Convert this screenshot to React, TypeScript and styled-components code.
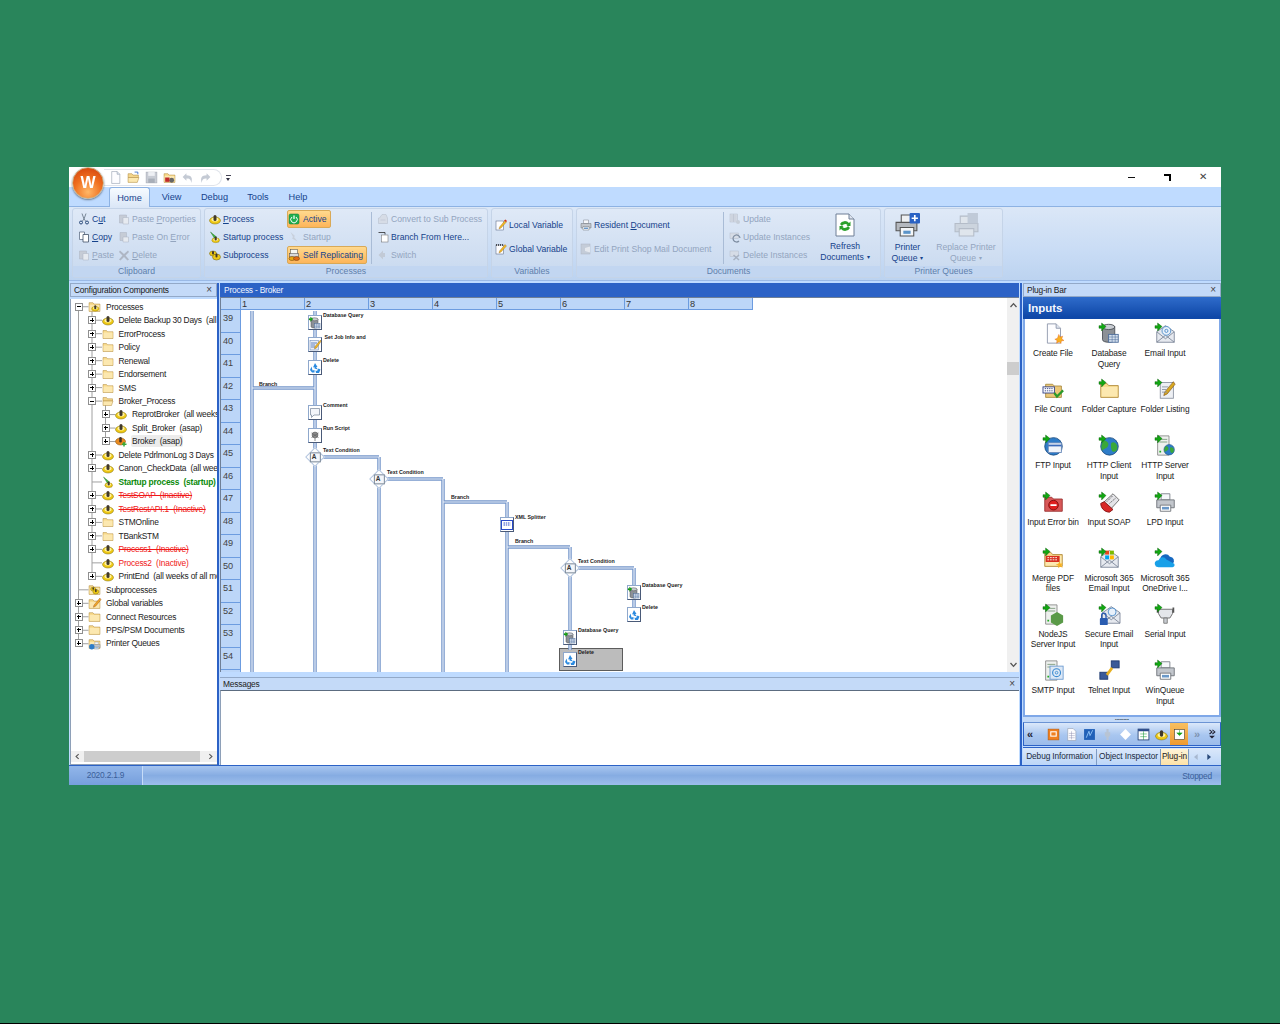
import React from "react";
import styled, { createGlobalStyle } from "styled-components";

const Global = createGlobalStyle`
  html, body { margin: 0; padding: 0; background: #29855b; }
  #root { font-family: "Liberation Sans", Arial, sans-serif; }
  * { box-sizing: border-box; }
`;

const Stage = styled.div`
  height: 1024px;
  padding: 167px 59px 0 69px;
  background: #29855b;
  border-bottom: 1px solid #000;
`;
const Win = styled.div`
  width: 1152px;
  height: 618px;
  display: flex;
  flex-direction: column;
  background: #bfdbff;
  position: relative;
  font-size: 8.4px;
  letter-spacing: -0.2px;
  color: #222;
  filter: blur(0.4px);
`;

/* ---------- icons ---------- */
const arrowBadge = <path d="M0 3h3V0l5 4-5 5V6H0z" fill="#12a812" stroke="#0a5a0a" strokeWidth=".5" />;
const gear = (
  <>
    <ellipse cx="12" cy="15" rx="11" ry="7" fill="#eec814" stroke="#7c6a08" />
    <ellipse cx="12" cy="13" rx="7" ry="4" fill="#fff2a0" />
    <rect x="9" y="4" width="6" height="12" rx="3" fill="#40382a" />
  </>
);
const folder = (
  <>
    <path d="M2 5h7l2 2.500h11V21H2z" fill="#f8d98a" stroke="#b08a3e" />
    <path d="M3 9h18v11H3z" fill="#fce8b0" />
  </>
);
const folderOpen = (
  <>
    <path d="M2 5h7l2 2.500h10V12H2z" fill="#f4d68c" stroke="#b08a3e" />
    <path d="M2 12h20l-3 9H2z" fill="#fce8b0" stroke="#b08a3e" />
  </>
);
const page = <path d="M5 1h10l5 5v17H5z" fill="#fdfdff" stroke="#8a94a8" />;
const pageFold = <path d="M15 1v5h5" fill="#dfe5ef" stroke="#8a94a8" />;
const printer = (
  <>
    <path d="M7 2h10v7H7z" fill="#f5f7fa" stroke="#7a7f88" />
    <path d="M2 9h20v9H2z" fill="#c2c6cc" stroke="#6c7076" />
    <path d="M6 15h12v7H6z" fill="#fff" stroke="#6c7076" />
    <rect x="8" y="17" width="8" height="3" fill="#6a98c8" />
  </>
);
const db = (
  <>
    <path d="M4 4v15c0 4 14 4 14 0V4z" fill="#8c9096" stroke="#4c5056" />
    <ellipse cx="11" cy="4.500" rx="7" ry="3" fill="#c8ccd2" stroke="#4c5056" />
    <rect x="11" y="13" width="11" height="9" fill="#d4e0ee" stroke="#4a6a98" />
    <path d="M11 16h11M11 19h11M15 13v9M18.500 13v9" stroke="#4a6a98" strokeWidth=".6" />
  </>
);
const mail = (
  <>
    <path d="M2 10l10-7 10 7v12H2z" fill="#e6e9ef" stroke="#7c8698" />
    <path d="M2 22l10-8 10 8M2 10l10 8 10-8" fill="none" stroke="#7c8698" />
  </>
);
const globe = (
  <>
    <circle cx="12" cy="13" r="10" fill="#2e7cc8" stroke="#184a80" />
    <path d="M6 6c4 1 6 4 4 7s-5 2-6 5c-2-3-2-8 2-12zM14 9c3-2 7 1 7 5s-3 6-5 5-3-7-2-10z" fill="#3aa83a" />
  </>
);
const server = (
  <>
    <path d="M3 1h13v22H3z" fill="#eef0ee" stroke="#888" />
    <path d="M5 5h9M5 8h9" stroke="#7a9a7a" />
    <rect x="5" y="18" width="2" height="2" fill="#2a2" />
  </>
);
const recycle = (
  <path d="M12 2l5 8-3 0 4 5-7-2 0-3-3 1zM5 9l-3 7 4 5 5 0 0-5-4 1zM14 22l6 0 3-7-4-2-3 5-3-1z" fill="#2a8ae0" />
);
const subGears = (
  <>
    <ellipse cx="8" cy="9" rx="7" ry="5" fill="#eec814" stroke="#6a5a08" />
    <ellipse cx="15" cy="16" rx="8" ry="6" fill="#eec814" stroke="#6a5a08" />
    <rect x="13" y="9" width="4" height="8" rx="2" fill="#40382a" />
    <rect x="6" y="4" width="4" height="7" rx="2" fill="#40382a" />
  </>
);
const G: Record<string, React.ReactNode> = {
  newdoc: <>{page}{pageFold}</>,
  open: (
    <>
      {folderOpen}
      <path d="M14 2h6v4" fill="none" stroke="#2a62c4" strokeWidth="1.500" />
    </>
  ),
  save: (
    <>
      <rect x="2" y="2" width="20" height="20" fill="#c8ccd4" stroke="#a4a8b2" />
      <rect x="6" y="2" width="12" height="7" fill="#eef0f4" />
      <rect x="6" y="14" width="12" height="8" fill="#a8aeb8" />
    </>
  ),
  deploy: (
    <>
      {folder}
      <circle cx="16" cy="17" r="4.500" fill="#666" />
      <rect x="4" y="12" width="8" height="8" fill="#c02a2a" />
    </>
  ),
  undo: <path d="M3 11l7-7v4c9 0 12 5 9 14-1-7-4-8-9-8v4z" fill="#c4cad4" />,
  redo: <path d="M21 11l-7-7v4c-9 0-12 5-9 14 1-7 4-8 9-8v4z" fill="#c4cad4" />,
  cutRings: (
    <>
      <path d="M8 1l4 11 4-11M12 12l-4 5M12 12l4 5" fill="none" stroke="#7a8898" strokeWidth="2" />
      <circle cx="6" cy="19" r="3" fill="none" stroke="#2a4a7a" strokeWidth="2" />
      <circle cx="18" cy="19" r="3" fill="none" stroke="#2a4a7a" strokeWidth="2" />
    </>
  ),
  copy: (
    <>
      <path d="M3 2h10v15H3z" fill="#fff" stroke="#5a6a80" strokeWidth="1.500" />
      <path d="M10 7h11v15H10z" fill="#fff" stroke="#3a4a60" strokeWidth="1.500" />
    </>
  ),
  paste: (
    <>
      <path d="M3 4h14v16H3z" fill="#c6ccd6" stroke="#aab2c0" />
      <path d="M10 9h11v13H10z" fill="#e6eaf0" stroke="#aab2c0" />
    </>
  ),
  pasteErr: (
    <>
      <path d="M4 3h13v16H4z" fill="#c6ccd6" stroke="#aab2c0" />
      <path d="M10 12h11v10H10z" fill="#e6eaf0" stroke="#aab2c0" />
    </>
  ),
  del: <path d="M4 3l8 7 8-7 2 3-7 7 7 8-3 2-7-7-7 7-3-2 7-8-7-7z" fill="#aeb6c4" />,
  process: gear,
  startup: (
    <>
      <path d="M3 2l12 10-3 2 8 8-12-6 2-3z" fill="#3fb83f" stroke="#1a6a1a" strokeWidth=".8" />
      <g transform="translate(5 8) scale(.7)">{gear}</g>
    </>
  ),
  startupOff: <path d="M5 2l9 8-2 2 7 9-11-6 2-3z" fill="#c8d0dc" />,
  subprocess: subGears,
  active: (
    <>
      <rect x="2" y="2" width="20" height="20" rx="3" fill="#20b050" stroke="#0c7030" />
      <path d="M12 5v7" stroke="#fff" strokeWidth="2.500" />
      <path d="M8 8a6.500 6.500 0 1 0 8 0" fill="none" stroke="#fff" strokeWidth="2" />
    </>
  ),
  selfrep: (
    <>
      <rect x="5" y="1" width="14" height="10" fill="#f6f6f0" stroke="#444" />
      <rect x="3" y="9" width="18" height="7" fill="#d8d8d8" stroke="#444" />
      <ellipse cx="8" cy="19" rx="6" ry="4" fill="#e8a814" stroke="#6a3a08" />
      <ellipse cx="17" cy="19" rx="6" ry="4" fill="#e06a14" stroke="#6a3a08" />
    </>
  ),
  convert: (
    <>
      <path d="M5 10l5-7h8l3 7v11H3V10z" fill="#d6dce6" stroke="#b2bac8" />
      <path d="M7 14h10" stroke="#b2bac8" />
    </>
  ),
  branch: (
    <>
      <path d="M3 3h13v4" fill="none" stroke="#222" strokeWidth="1.500" />
      <rect x="9" y="8" width="13" height="14" fill="#fff" stroke="#666" />
    </>
  ),
  switchOff: <path d="M3 12l9-9v5h4v8h-4v5z" fill="#c2cad6" />,
  localVar: (
    <>
      <rect x="2" y="4" width="15" height="18" fill="#fdfdff" stroke="#4a5a78" />
      <path d="M20 3L9 16l-1 4 4-2L23 6z" fill="#f0b828" stroke="#805010" strokeWidth=".6" />
      <path d="M18 3l4 3 2-2-3-3z" fill="#d03020" />
    </>
  ),
  globalVar: (
    <>
      <rect x="2" y="4" width="15" height="18" fill="#fdfdff" stroke="#4a5a78" />
      <path d="M3 2v4M7 2v4M11 2v4M15 2v4" stroke="#2a2a2a" strokeWidth="1.500" />
      <path d="M20 3L9 16l-1 4 4-2L23 6z" fill="#f0b828" stroke="#805010" strokeWidth=".6" />
    </>
  ),
  printer,
  editDoc: (
    <>
      <rect x="2" y="2" width="18" height="20" fill="#c4ccd8" stroke="#aab4c2" />
      <path d="M10 10l10-3v12l-10-3z" fill="#e4e8ee" />
    </>
  ),
  update: (
    <>
      <rect x="2" y="2" width="15" height="16" fill="#d6dce6" stroke="#b4bcca" />
      <path d="M4 6h11M4 10h11M4 14h11M9 2v16" stroke="#b4bcca" />
      <circle cx="18" cy="18" r="4" fill="#c6ced8" />
    </>
  ),
  updateInst: (
    <>
      <rect x="2" y="4" width="17" height="11" fill="#d6dce6" stroke="#b4bcca" />
      <path d="M22 14a7 7 0 1 0-2 6" fill="none" stroke="#7f8ea2" strokeWidth="2.500" />
    </>
  ),
  delInst: (
    <>
      <rect x="2" y="4" width="17" height="11" fill="#d6dce6" stroke="#b4bcca" />
      <path d="M9 12l11 10M20 12L9 22" stroke="#a8b2c2" strokeWidth="3" />
    </>
  ),
  refreshDoc: (
    <>
      <path d="M3 1h13l5 5v17H3z" fill="#fff" stroke="#6f7f96" />
      <path d="M16 1v5h5" fill="#dfe5ef" stroke="#6f7f96" />
      <path d="M7 11a5.500 5.500 0 0 1 9-1l1.500-1.500V13h-4l1-1a3.500 3.500 0 0 0-5.500 1z" fill="#2aa02a" />
      <path d="M17 15a5.500 5.500 0 0 1-9 1l-1.500 1.500V13h4l-1 1a3.500 3.500 0 0 0 5.500-1z" fill="#2aa02a" />
    </>
  ),
  printerAdd: (
    <>
      <path d="M6 2h10v8H6z" fill="#eef0f2" stroke="#555" />
      <path d="M1 9h20v8H1z" fill="#b4b8be" stroke="#555" />
      <path d="M5 14h13v8H5z" fill="#f4f6f8" stroke="#555" />
      <rect x="8" y="17" width="7" height="3" fill="#5c94c8" />
      <rect x="14" y="0" width="10" height="10" rx="1" fill="#2a62c4" />
      <path d="M19 2v6M16 5h6" stroke="#fff" strokeWidth="1.600" />
    </>
  ),
  printerOff: (
    <>
      <path d="M6 3h11v8H6z" fill="#dfe5ec" stroke="#b4bcc8" />
      <path d="M1 10h22v8H1z" fill="#ccd4de" stroke="#b4bcc8" />
      <path d="M5 15h14v7H5z" fill="#dfe5ec" stroke="#b4bcc8" />
      <rect x="13" y="0" width="10" height="10" fill="#c0cad8" />
    </>
  ),
  folder,
  folderOpen,
  procFolder: (
    <>
      {folder}
      <g transform="translate(6 7) scale(.62)">{gear}</g>
    </>
  ),
  procSel: (
    <>
      <ellipse cx="11" cy="13" rx="10" ry="7" fill="#e88a20" stroke="#7c4a08" />
      <rect x="8.500" y="4" width="5" height="11" rx="2.500" fill="#40302a" />
      <path d="M18 14v9M14 18.500h9" stroke="#36a836" strokeWidth="3" />
    </>
  ),
  subFolder: (
    <>
      {folder}
      <g transform="translate(4 5) scale(.7)">{subGears}</g>
    </>
  ),
  varFolder: (
    <>
      {folder}
      <path d="M22 2L11 15l-1 4 4-2L24 5z" fill="#f0a828" stroke="#904010" strokeWidth=".7" />
    </>
  ),
  printFolder: (
    <>
      {folder}
      <g transform="translate(8 8) scale(.65)">{printer}</g>
      <circle cx="7" cy="18" r="5" fill="#2e7cc8" />
    </>
  ),
  /* plug-ins */
  createFile: (
    <>
      {page}{pageFold}
      <path d="M18 13l1.500 3 3-1-1 3 2.500 2-3 .5-.5 3-2-2-3 1.500.5-3-2.500-1.500 3-1z" fill="#f8b020" stroke="#e05010" strokeWidth=".4" />
    </>
  ),
  dbQuery: <>{db}{arrowBadge}</>,
  email: (
    <>
      {mail}
      <circle cx="13" cy="9" r="5" fill="#e8f0fa" stroke="#4a8ac8" />
      <circle cx="13" cy="9" r="1.800" fill="none" stroke="#4a8ac8" />
      {arrowBadge}
    </>
  ),
  fileCount: (
    <>
      <path d="M3 6h8l2 2h8v13H3z" fill="#ecc878" stroke="#a88a40" />
      <rect x="0" y="9" width="13" height="7" fill="#fff" stroke="#2a3a80" />
      <path d="M2 11h9M2 13.500h9" stroke="#2a3a80" strokeDasharray="1.500 1" />
      <path d="M13 16l3 4 7-7" fill="none" stroke="#2a9a2a" strokeWidth="2.500" />
    </>
  ),
  folderCap: <>{folder}{arrowBadge}</>,
  listing: (
    <>
      <rect x="6" y="4" width="15" height="18" fill="#eef0f4" stroke="#8a92a0" />
      <path d="M21 3L11 15l-1 4 4-2L23 6z" fill="#d8a820" stroke="#704010" strokeWidth=".6" />
      <path d="M8 9h7M8 12h5M8 15h6" stroke="#8a92a0" />
      {arrowBadge}
    </>
  ),
  jobInfo: (
    <>
      <rect x="2" y="3" width="17" height="19" fill="#e8eef8" stroke="#5a7ab0" />
      <path d="M4 8h12M4 12h8M4 16h10" stroke="#3a62a8" strokeWidth="1.500" />
      <path d="M23 2L12 15l-1 5 4-2L24 5z" fill="#f0b828" stroke="#805010" strokeWidth=".7" />
    </>
  ),
  comment: (
    <path d="M3 3h18v13H10l-5 5v-5H3z" fill="#f4f6fa" stroke="#6a7a90" strokeWidth="1.300" />
  ),
  script: (
    <>
      <circle cx="12" cy="10" r="6" fill="#8a8a8a" stroke="#555" />
      <path d="M5 6l14 9M19 6L5 15M12 16v6" stroke="#666" strokeWidth="1.500" />
    </>
  ),
  ftp: (
    <>
      <circle cx="12" cy="13" r="10" fill="#2e7cc8" stroke="#184a80" />
      <rect x="6" y="9" width="15" height="11" fill="#f0f4fa" stroke="#6a8aba" />
      <path d="M6 12h15" stroke="#3a6aba" strokeWidth="2" />
      {arrowBadge}
    </>
  ),
  httpClient: <>{globe}{arrowBadge}</>,
  httpServer: (
    <>
      {server}
      <g transform="translate(9 9) scale(.6)">{globe}</g>
      {arrowBadge}
    </>
  ),
  errBin: (
    <>
      <path d="M2 6h8l2 2h10v14H2z" fill="#d85858" stroke="#983030" />
      <circle cx="12" cy="15" r="5.500" fill="#e02020" stroke="#7a1010" />
      <rect x="8.500" y="14" width="7" height="2" fill="#fff" />
      {arrowBadge}
    </>
  ),
  soap: (
    <>
      <path d="M4 13L16 2l7 7-11 12z" fill="#e4e4e8" stroke="#666" />
      <path d="M2 13l4-2 10 9-4 3c-6 0-10-5-10-10z" fill="#d82828" stroke="#801010" />
      <path d="M9 11l7-7M12 13l7-6" stroke="#555" strokeDasharray="1.500 1" />
      {arrowBadge}
    </>
  ),
  lpd: <>{printer}{arrowBadge}</>,
  mergePdf: (
    <>
      {folder}
      <rect x="3" y="9" width="16" height="7" fill="#d83020" />
      <path d="M5 11h12M5 13.500h12" stroke="#fff" strokeDasharray="2 1" />
      <path d="M19 15l1 3 3-.5-2 2 1.500 3-3-1.500-2 2v-3l-3-1 3-1z" fill="#f8b020" />
      {arrowBadge}
    </>
  ),
  ms365Mail: (
    <>
      {mail}
      <rect x="7" y="3" width="4.500" height="4.500" fill="#e8471c" />
      <rect x="12.500" y="3" width="4.500" height="4.500" fill="#7cbb00" />
      <rect x="7" y="8.500" width="4.500" height="4.500" fill="#00a4ef" />
      <rect x="12.500" y="8.500" width="4.500" height="4.500" fill="#ffb900" />
      {arrowBadge}
    </>
  ),
  oneDrive: (
    <>
      <path d="M6 13a6 6 0 0 1 11-3 4.500 4.500 0 0 1 3 8H8z" fill="#1668c0" />
      <path d="M1 21a4 4 0 0 1 3-7 5 5 0 0 1 9-1l9 5a3 3 0 0 1-2 4H4z" fill="#18a0e8" />
      {arrowBadge}
    </>
  ),
  nodeJs: (
    <>
      {server}
      <path d="M16 9l7 4v8l-7 4-7-4v-8z" fill="#5a9a48" />
      {arrowBadge}
    </>
  ),
  secureMail: (
    <>
      <g transform="translate(2 0)">{mail}</g>
      <circle cx="15" cy="9" r="4.500" fill="#e8f0fa" stroke="#4a8ac8" />
      <rect x="1" y="16" width="9" height="8" rx="1" fill="#2a5cb0" />
      <path d="M3 16v-3a2.500 2.500 0 0 1 5 0v3" fill="none" stroke="#2a5cb0" strokeWidth="1.500" />
      {arrowBadge}
    </>
  ),
  serial: (
    <>
      <path d="M4 6h16v5l-3 5h-10l-3-5z" fill="#e4e6ea" stroke="#666" />
      <path d="M10 16h4v6h-4z" fill="#c8ccd2" stroke="#777" />
      <path d="M2 4h2v6H2zM20 4h2v6h-2z" fill="#555" />
      {arrowBadge}
    </>
  ),
  smtp: (
    <>
      {server}
      <rect x="8" y="7" width="15" height="15" fill="#dce8f6" stroke="#6a9ad0" />
      <circle cx="15.500" cy="14.500" r="4.500" fill="none" stroke="#3a8ad0" strokeWidth="1.300" />
      <circle cx="15.500" cy="14.500" r="1.500" fill="none" stroke="#3a8ad0" />
    </>
  ),
  telnet: (
    <>
      <rect x="14" y="1" width="9" height="8" fill="#3a5a98" stroke="#1e3a70" />
      <rect x="1" y="14" width="9" height="8" fill="#3a5a98" stroke="#1e3a70" />
      <path d="M9 17l6-8" stroke="#e8b020" strokeWidth="3" />
    </>
  ),
  winQueue: <>{printer}{arrowBadge}</>,
  /* toolbar */
  tbOrange: (
    <>
      <rect x="2" y="2" width="20" height="20" fill="#f08020" stroke="#b05a10" />
      <rect x="6" y="6" width="12" height="10" fill="#fff" />
      <rect x="8" y="8" width="8" height="6" fill="#f08020" />
    </>
  ),
  tbSheet: (
    <>
      {page}
      <path d="M7 10h11M7 14h11M7 18h11M12 6v15" stroke="#88a" strokeWidth=".8" />
    </>
  ),
  tbBlue: (
    <>
      <rect x="2" y="2" width="20" height="20" fill="#2060b8" />
      <path d="M6 18l5-12 2 8 5-10" stroke="#9fd0ff" strokeWidth="1.500" fill="none" />
    </>
  ),
  tbPlug: <path d="M10 2v6H7v6l3 3v5h4v-5l3-3V8h-3V2z" fill="#b8c4d4" />,
  tbDiamond: <path d="M12 2l10 10-10 10L2 12z" fill="#fff" />,
  tbPanel: (
    <>
      <rect x="2" y="2" width="20" height="20" fill="#fff" stroke="#1e3a70" strokeWidth="1.500" />
      <rect x="2" y="2" width="20" height="4" fill="#2a4a8a" />
      <path d="M12 6v16M6 11h12M6 16h12" stroke="#1a9a3a" />
    </>
  ),
  tbInput: (
    <>
      <rect x="3" y="3" width="18" height="18" fill="#fff" stroke="#333" />
      <path d="M12 4v6M7 9l5 5 5-5z" fill="#18a018" stroke="#18a018" />
    </>
  ),
  tbMore: (
    <>
      <path d="M6 2l6 5-6 5M13 2l6 5-6 5" fill="none" stroke="#223" strokeWidth="2.500" />
      <path d="M5 16h14l-7 7z" fill="#223" />
    </>
  ),
  rec: recycle,
  xml: (
    <>
      <rect x="1" y="3" width="22" height="18" fill="#fff" stroke="#2a4ac8" strokeWidth="2" />
      <path d="M5 8h14M5 12h14" stroke="#2a4ac8" strokeWidth="2" strokeDasharray="3 1.500" />
    </>
  ),
  chevUp: <path d="M4 16l8-9 8 9" fill="none" stroke="#555" strokeWidth="3.500" />,
  chevDown: <path d="M4 8l8 9 8-9" fill="none" stroke="#555" strokeWidth="3.500" />,
  chevLeft: <path d="M16 4l-9 8 9 8" fill="none" stroke="#555" strokeWidth="3.500" />,
  chevRight: <path d="M8 4l9 8-9 8" fill="none" stroke="#555" strokeWidth="3.500" />,
  triLeft: <path d="M17 3L6 12l11 9z" fill="#a8b8d0" />,
  triRight: <path d="M7 3l11 9-11 9z" fill="#2a4a7a" />,
};
const Icon: React.FC<{ n: string; s?: number }> = ({ n, s = 12 }) => (
  <svg width={s} height={s} viewBox="0 0 24 24" style={{ flex: "none", display: "block", overflow: "visible" }}>
    {G[n]}
  </svg>
);

/* ---------- title bar ---------- */
const TitleBar = styled.div`
  height: 20px;
  background: #fff;
  display: flex;
  align-items: center;
  padding-left: 35px;
`;
const Quick = styled.div`
  width: 118px;
  height: 17px;
  display: flex;
  align-items: center;
  gap: 5px;
  padding-left: 5px;
  border: 1px solid #dfe3ea;
  border-left: none;
  border-radius: 0 9px 9px 0;
`;
const QuickDrop = styled.span`
  margin-left: 4px;
  width: 5px;
  height: 7px;
  border-top: 1px solid #445;
  position: relative;
  margin-top: 2px;
  &::after {
    content: "";
    position: absolute;
    left: 0;
    top: 2px;
    border: 2.500px solid transparent;
    border-top: 3px solid #334;
  }
`;
const Orb = styled.div`
  position: absolute;
  left: 3px;
  top: 0;
  width: 32px;
  height: 32px;
  border-radius: 50%;
  border: 1px solid #c9b38a;
  background: radial-gradient(circle at 50% 80%, #ffb868 0%, #f07020 48%, #d84a10 85%);
  box-shadow: 0 1px 2px #6a7a90;
  color: #fff;
  font: bold 16px "Liberation Sans", sans-serif;
  letter-spacing: 0;
  display: flex;
  align-items: center;
  justify-content: center;
`;
const WinBtns = styled.div`
  margin-left: auto;
  width: 93px;
  display: flex;
  align-items: center;
  justify-content: space-between;
  padding: 0 14px 0 0;
`;
const Min = styled.span`
  width: 7px;
  height: 1px;
  background: #111;
`;
const Restore = styled.span`
  width: 7px;
  height: 7px;
  border-top: 2px solid #000;
  border-right: 2px solid #000;
`;
const CloseMark = styled.span`
  font-size: 10px;
  line-height: 10px;
  color: #444;
`;

/* ---------- ribbon ---------- */
const Tabs = styled.div`
  height: 20px;
  display: flex;
  align-items: flex-end;
  padding-left: 40px;
  border-bottom: 1px solid #8db2e3;
`;
const Tab = styled.div<{ $on?: boolean; $w: number }>`
  width: ${(p) => p.$w}px;
  height: 19px;
  text-align: center;
  line-height: 21px;
  font-size: 9.200px;
  letter-spacing: 0;
  color: #15428b;
  border-radius: 3px 3px 0 0;
  ${(p) =>
    p.$on
      ? "background: linear-gradient(#f6fbff, #dbe7f7); border: 1px solid #8db2e3; border-bottom: none; margin-bottom: -1px; height: 20px;"
      : ""}
`;
const Ribbon = styled.div`
  height: 74px;
  padding: 1px 0 0 3px;
  display: flex;
  gap: 3px;
  background: linear-gradient(#dbe7f7, #c9dcf5 60%, #bcd3f0);
  border-bottom: 1px solid #9ab9e6;
`;
const Group = styled.div<{ $w: number }>`
  width: ${(p) => p.$w}px;
  height: 70px;
  flex: none;
  display: flex;
  flex-direction: column;
  border: 1px solid #c5d4e8;
  border-radius: 3px;
  background: linear-gradient(#dfe9f7, #c8d9ef);
`;
const GroupBody = styled.div`
  flex: 1;
  display: flex;
  min-height: 0;
`;
const GroupName = styled.div`
  height: 11px;
  line-height: 11px;
  text-align: center;
  font-size: 8.650px;
  letter-spacing: 0;
  color: #5f80ab;
  background: #c2d6f1;
`;
const Col = styled.div<{ $w?: number; $pl?: number; $wide?: boolean }>`
  width: ${(p) => (p.$w ? p.$w + "px" : "auto")};
  padding-left: ${(p) => p.$pl ?? 0}px;
  padding-top: ${(p) => (p.$wide ? "4px" : "1px")};
  flex: none;
  display: flex;
  flex-direction: column;
`;
const Cmd = styled.div<{ $off?: boolean; $hot?: boolean; $h: number; $g: number }>`
  height: ${(p) => p.$h}px;
  display: flex;
  align-items: center;
  gap: ${(p) => p.$g}px;
  font-size: 8.650px;
  letter-spacing: 0;
  white-space: nowrap;
  color: ${(p) => (p.$off ? "#93a5bf" : "#15428b")};
  ${(p) =>
    p.$hot
      ? "background: linear-gradient(#ffd98e, #fdb55a); border: 1px solid #d9a957; border-radius: 2px; margin-left: -1px; width: fit-content; padding-right: 3px;"
      : ""}
`;
const Sep = styled.div`
  width: 1px;
  margin: 3px 5px 2px 2px;
  background: #a9bcd6;
  flex: none;
`;
const Big = styled.div<{ $off?: boolean; $w: number }>`
  width: ${(p) => p.$w}px;
  display: flex;
  flex-direction: column;
  align-items: center;
  flex: none;
  padding-top: 4px;
  font-size: 8.650px;
  letter-spacing: 0;
  line-height: 11px;
  text-align: center;
  color: ${(p) => (p.$off ? "#93a5bf" : "#15428b")};
`;
const BigLabel = styled.div`
  margin-top: 4px;
  white-space: nowrap;
`;
const Caret = styled.span`
  display: inline-block;
  margin-left: 3px;
  font-size: 6px;
  vertical-align: 1px;
`;

/* ---------- panes ---------- */
const Main = styled.div`
  flex: 1;
  display: flex;
  min-height: 0;
  padding: 2px 0 0 0;
  gap: 1px;
`;
const LeftPane = styled.div`
  width: 150px;
  flex: none;
  display: flex;
  flex-direction: column;
  border-right: 2px solid #2c62c6;
  padding-left: 1px;
`;
const CenterPane = styled.div`
  width: 799px;
  flex: none;
  display: flex;
  flex-direction: column;
`;
const RightPane = styled.div`
  flex: 1;
  min-width: 0;
  display: flex;
  flex-direction: column;
  border-left: 2px solid #2c62c6;
  padding-left: 1px;
`;
const PaneHead = styled.div<{ $blue?: boolean }>`
  height: 14px;
  flex: none;
  display: flex;
  align-items: center;
  justify-content: space-between;
  padding: 0 4px 1px 3px;
  border: 1px solid ${(p) => (p.$blue ? "#2c62c6" : "#93a9c8")};
  background: ${(p) => (p.$blue ? "#2c62c6" : "#c4daf8")};
  color: ${(p) => (p.$blue ? "#eef4ff" : "#202020")};
`;
const X = styled.span`
  font-size: 10px;
  line-height: 10px;
  color: #444;
`;

/* tree */
const TreeBox = styled.div`
  flex: 1;
  position: relative;
  background: #fff;
  border: 1px solid #8ea0b8;
  border-right: none;
  border-top: none;
  margin-top: 2px;
  padding-top: 1px;
  overflow: hidden;
  min-height: 0;
`;
const Guides = styled.svg`
  position: absolute;
  left: 0;
  top: 0;
`;
const Row = styled.div<{ $lv: number }>`
  position: relative;
  height: 13.480px;
  display: flex;
  align-items: center;
  padding-left: ${(p) => p.$lv * 13.500 + 2}px;
  white-space: pre;
`;
const ExpSlot = styled.span`
  width: 11px;
  margin-right: 4px;
  flex: none;
  display: flex;
  justify-content: center;
`;
const Exp = styled.span<{ $open?: boolean }>`
  width: 8px;
  height: 8px;
  border: 1px solid #8f8f8f;
  background: #fff;
  position: relative;
  &::before {
    content: "";
    position: absolute;
    left: 1px;
    right: 1px;
    top: 2.500px;
    height: 1px;
    background: #000;
  }
  &::after {
    content: "";
    display: ${(p) => (p.$open ? "none" : "block")};
    position: absolute;
    top: 1px;
    bottom: 1px;
    left: 2.500px;
    width: 1px;
    background: #000;
  }
`;
const NodeText = styled.span<{ $kind?: string; $sel?: boolean }>`
  margin-left: 5px;
  ${(p) => (p.$sel ? "background:#ececec; border-radius:2px; padding:1px 1px; margin-left:4px;" : "")}
  ${(p) => (p.$kind === "green" ? "color:#0a8a0a; font-weight:bold;" : "")}
  ${(p) => (p.$kind === "red" ? "color:#f01818;" : "")}
  ${(p) => (p.$kind === "strike" ? "color:#f01818; text-decoration:line-through;" : "")}
`;
const HScroll = styled.div`
  position: absolute;
  left: 0;
  right: 0;
  bottom: 2px;
  height: 11px;
  background: #f0f0f0;
  display: flex;
  align-items: center;
  justify-content: space-between;
  padding: 0 3px;
`;
const HThumb = styled.span`
  position: absolute;
  left: 13px;
  width: 116px;
  top: 0;
  bottom: 0;
  background: #cdcdcd;
`;

/* canvas */
const CanvasBox = styled.div`
  height: 375px;
  flex: none;
  display: flex;
  background: #fff;
  border-top: 1px solid #6f7f96;
  border-left: 1px solid #6f7f96;
`;
const CanvasMain = styled.div`
  flex: 1;
  min-width: 0;
  display: flex;
  flex-direction: column;
`;
const Ruler = styled.div`
  display: flex;
  height: 12px;
  flex: none;
`;
const RulerCorner = styled.div`
  width: 20px;
  background: #bcd6f8;
  border-right: 1px solid #6c9ce0;
  border-bottom: 1px solid #6c9ce0;
`;
const RulerCell = styled.div`
  width: 64px;
  padding-left: 1px;
  line-height: 13px;
  background: #bcd6f8;
  border-right: 1px solid #6c9ce0;
  border-bottom: 1px solid #6c9ce0;
  font-size: 9.200px;
  letter-spacing: 0;
  color: #333;
`;
const CanvasBody = styled.div`
  flex: 1;
  display: flex;
  min-height: 0;
`;
const RowHeader = styled.div`
  width: 20px;
  flex: none;
  overflow: hidden;
  background: #bcd6f8;
  border-right: 1px solid #6c9ce0;
`;
const RowNum = styled.div`
  height: 22.500px;
  padding: 3px 0 0 2px;
  font-size: 9.200px;
  line-height: 11px;
  letter-spacing: 0;
  color: #444;
  border-bottom: 1px solid #6c9ce0;
`;
const Sheet = styled.div`
  position: relative;
  flex: 1;
  overflow: hidden;
`;
const Wires = styled.svg`
  position: absolute;
  left: 0;
  top: 0;
`;
const Selection = styled.div`
  position: absolute;
  left: 318px;
  top: 338px;
  width: 64px;
  height: 23px;
  background: #bcbcbc;
  border: 1px solid #5c5c5c;
`;
const NodeTile = styled.div<{ $x: number; $y: number }>`
  position: absolute;
  left: ${(p) => p.$x}px;
  top: ${(p) => p.$y}px;
  width: 14px;
  height: 15px;
  background: #fff;
  border: 1px solid #8fa8cc;
  border-right-color: #4a5a78;
  border-bottom-color: #4a5a78;
  display: flex;
  align-items: center;
  justify-content: center;
`;
const Diamond = styled.div<{ $x: number; $y: number }>`
  position: absolute;
  left: ${(p) => p.$x}px;
  top: ${(p) => p.$y}px;
  width: 14px;
  height: 14px;
  background: #fff;
  border: 1px solid #b4c6e0;
  transform: rotate(45deg);
  display: flex;
  align-items: center;
  justify-content: center;
`;
const DiamondA = styled.span`
  transform: rotate(-45deg);
  width: 11px;
  height: 10px;
  display: block;
  border: 1px solid #7a8898;
  font-size: 6.500px;
  font-weight: bold;
  color: #333;
  line-height: 8px;
  padding-left: 1px;
  background: #f4f6fa;
`;
const NodeLabel = styled.div<{ $x: number; $y: number }>`
  position: absolute;
  left: ${(p) => p.$x}px;
  top: ${(p) => p.$y}px;
  font-size: 5.300px;
  letter-spacing: 0;
  line-height: 7px;
  font-weight: bold;
  white-space: pre;
  color: #1a1a1a;
`;
const VScroll = styled.div`
  width: 12px;
  flex: none;
  background: #f0f0f0;
  position: relative;
  padding: 3px 0;
  display: flex;
  flex-direction: column;
  justify-content: space-between;
  align-items: center;
`;
const VThumb = styled.span`
  position: absolute;
  left: 0;
  right: 0;
  top: 64px;
  height: 13px;
  background: #cdcdcd;
`;
const MsgGap = styled.div`
  height: 5px;
  flex: none;
`;
const MsgHead = styled.div`
  height: 13px;
  flex: none;
  display: flex;
  align-items: center;
  justify-content: space-between;
  padding: 0 4px 0 3px;
  background: #c4daf8;
  border-top: 1px solid #93a9c8;
`;
const MsgBody = styled.div`
  flex: 1;
  background: #fff;
  border-top: 1px solid #5c6c80;
  border-left: 1px solid #8ea0b8;
`;

/* plug-ins */
const InputsHead = styled.div`
  height: 22px;
  flex: none;
  padding-left: 5px;
  line-height: 23px;
  font-size: 11.500px;
  letter-spacing: 0;
  font-weight: bold;
  color: #f4f8ff;
  background: linear-gradient(#2f6ccb, #0f48a8 90%);
`;
const PluginGrid = styled.div`
  flex: none;
  height: 398px;
  padding: 4px 0 0 0;
  background: #fff;
  border: 2px solid #7fa8e8;
  border-top: none;
  display: grid;
  grid-template-columns: repeat(3, 56px);
  grid-auto-rows: 56.200px;
`;
const Plugin = styled.div`
  display: flex;
  flex-direction: column;
  align-items: center;
  text-align: center;
  font-size: 8.400px;
  letter-spacing: -0.1px;
  line-height: 10.500px;
  color: #1a1a1a;
  white-space: nowrap;
`;
const PluginLabel = styled.div`
  margin-top: 4px;
`;
const Grip = styled.div`
  height: 5px;
  flex: none;
  display: flex;
  align-items: center;
  justify-content: center;
  background: #c4daf8;
  color: #345;
  font-size: 4px;
  letter-spacing: 0;
  line-height: 5px;
  overflow: hidden;
`;
const ToolStrip = styled.div`
  height: 24px;
  flex: none;
  display: flex;
  align-items: center;
  background: linear-gradient(#dbe8fa, #a8c6f0 55%, #9cbcea);
  border: 1px solid #2c62c6;
  border-top-color: #6c94d4;
  overflow: hidden;
  font-size: 11px;
  letter-spacing: 0;
  font-weight: bold;
  color: #223;
`;
const ToolBtn = styled.div<{ $on?: boolean; $dim?: boolean; $w?: number; $mr?: number }>`
  width: ${(p) => p.$w ?? 18}px;
  margin-right: ${(p) => p.$mr ?? 0}px;
  height: 22px;
  flex: none;
  display: flex;
  align-items: center;
  justify-content: center;
  color: ${(p) => (p.$dim ? "#7f93b0" : "inherit")};
  ${(p) => (p.$on ? "background: linear-gradient(#f8c060, #ee9a30);" : "")}
`;
const DockTabs = styled.div`
  height: 18px;
  flex: none;
  margin-top: 1px;
  display: flex;
  align-items: flex-end;
  background: linear-gradient(#dbe8fa, #bcd6f8);
  border-top: 1px solid #2c62c6;
  font-size: 8.300px;
  letter-spacing: -0.1px;
  white-space: nowrap;
  overflow: hidden;
  color: #1a2a40;
`;
const DockTab = styled.div<{ $on?: boolean; $w: number }>`
  width: ${(p) => p.$w}px;
  height: 16px;
  flex: none;
  line-height: 15px;
  text-align: center;
  overflow: hidden;
  border-right: 1px solid #7f9cc4;
  ${(p) => (p.$on ? "background: linear-gradient(#fff4d8, #fde2a8); color:#222;" : "")}
`;
const DockArrows = styled.div`
  flex: 1;
  height: 16px;
  display: flex;
  justify-content: space-around;
  align-items: center;
  padding-right: 6px;
`;

/* status */
const Status = styled.div`
  height: 20px;
  flex: none;
  display: flex;
  align-items: center;
  justify-content: space-between;
  background: linear-gradient(#a8c6f0, #86ace2 50%, #9cbeec);
  border-top: 1px solid #2c62c6;
  color: #3a5f9a;
`;
const Version = styled.div`
  width: 74px;
  height: 100%;
  text-align: center;
  line-height: 18px;
  background: linear-gradient(#92b6ea, #769fdc);
  border-right: 1px solid #c6dcf8;
`;
const Stopped = styled.div`
  padding-right: 9px;
`;

/* ---------- data ---------- */
const u = (a: string, b: string, c: string) => (
  <span>
    {a}
    <u>{b}</u>
    {c}
  </span>
);

type TN = { t: string; lv: number; ic: string; exp?: "+" | "-"; kind?: string; sel?: boolean };
const tree: TN[] = [
  { t: "Processes", lv: 0, ic: "procFolder", exp: "-" },
  { t: "Delete Backup 30 Days  (all weeks of all months)", lv: 1, ic: "process", exp: "+" },
  { t: "ErrorProcess", lv: 1, ic: "folder", exp: "+" },
  { t: "Policy", lv: 1, ic: "folder", exp: "+" },
  { t: "Renewal", lv: 1, ic: "folder", exp: "+" },
  { t: "Endorsement", lv: 1, ic: "folder", exp: "+" },
  { t: "SMS", lv: 1, ic: "folder", exp: "+" },
  { t: "Broker_Process", lv: 1, ic: "folderOpen", exp: "-" },
  { t: "ReprotBroker  (all weeks of all months)", lv: 2, ic: "process", exp: "+" },
  { t: "Split_Broker  (asap)", lv: 2, ic: "process", exp: "+" },
  { t: "Broker  (asap)", lv: 2, ic: "procSel", exp: "+", sel: true },
  { t: "Delete PdrlmonLog 3 Days  (all weeks)", lv: 1, ic: "process", exp: "+" },
  { t: "Canon_CheckData  (all weeks of all months)", lv: 1, ic: "process", exp: "+" },
  { t: "Startup process  (startup)", lv: 1, ic: "startup", kind: "green" },
  { t: "TestSOAP  (Inactive)", lv: 1, ic: "process", exp: "+", kind: "strike" },
  { t: "TestRestAPI.1  (Inactive)", lv: 1, ic: "process", exp: "+", kind: "strike" },
  { t: "STMOnline", lv: 1, ic: "folder", exp: "+" },
  { t: "TBankSTM", lv: 1, ic: "folder", exp: "+" },
  { t: "Process1  (Inactive)", lv: 1, ic: "process", exp: "+", kind: "strike" },
  { t: "Process2  (Inactive)", lv: 1, ic: "process", kind: "red" },
  { t: "PrintEnd  (all weeks of all months)", lv: 1, ic: "process", exp: "+" },
  { t: "Subprocesses", lv: 0, ic: "subFolder" },
  { t: "Global variables", lv: 0, ic: "varFolder", exp: "+" },
  { t: "Connect Resources", lv: 0, ic: "folder", exp: "+" },
  { t: "PPS/PSM Documents", lv: 0, ic: "folder", exp: "+" },
  { t: "Printer Queues", lv: 0, ic: "printFolder", exp: "+" },
];

const plugins: [string, string][] = [
  ["createFile", "Create File"],
  ["dbQuery", "Database\nQuery"],
  ["email", "Email Input"],
  ["fileCount", "File Count"],
  ["folderCap", "Folder Capture"],
  ["listing", "Folder Listing"],
  ["ftp", "FTP Input"],
  ["httpClient", "HTTP Client\nInput"],
  ["httpServer", "HTTP Server\nInput"],
  ["errBin", "Input Error bin"],
  ["soap", "Input SOAP"],
  ["lpd", "LPD Input"],
  ["mergePdf", "Merge PDF\nfiles"],
  ["ms365Mail", "Microsoft 365\nEmail Input"],
  ["oneDrive", "Microsoft 365\nOneDrive I..."],
  ["nodeJs", "NodeJS\nServer Input"],
  ["secureMail", "Secure Email\nInput"],
  ["serial", "Serial Input"],
  ["smtp", "SMTP Input"],
  ["telnet", "Telnet Input"],
  ["winQueue", "WinQueue\nInput"],
];

const ox = 241; // sheet origin in page coordinates
const oy = 310;
const wireSegs: [number, number, number, number][] = [
  [252, 311, 252, 673],
  [252, 388, 315, 388],
  [315, 311, 315, 673],
  [315, 457, 379, 457],
  [379, 457, 379, 673],
  [379, 479, 443, 479],
  [443, 479, 443, 673],
  [443, 502, 507, 502],
  [507, 502, 507, 673],
  [507, 547, 570, 547],
  [570, 547, 570, 650],
  [570, 568, 634, 568],
  [634, 568, 634, 620],
];
const nodes: { kind: string; x: number; y: number; ic?: string; label: string }[] = [
  { kind: "tile", x: 315, y: 322, ic: "dbQuery", label: "Database Query" },
  { kind: "tile", x: 315, y: 344, ic: "jobInfo", label: " Set Job Info and" },
  { kind: "tile", x: 315, y: 367, ic: "rec", label: "Delete" },
  { kind: "tile", x: 315, y: 412, ic: "comment", label: "Comment" },
  { kind: "tile", x: 315, y: 435, ic: "script", label: "Run Script" },
  { kind: "dia", x: 315, y: 457, label: "Text Condition" },
  { kind: "dia", x: 379, y: 479, label: "Text Condition" },
  { kind: "tile", x: 507, y: 524, ic: "xml", label: "XML Splitter" },
  { kind: "dia", x: 570, y: 568, label: "Text Condition" },
  { kind: "tile", x: 634, y: 592, ic: "dbQuery", label: "Database Query" },
  { kind: "tile", x: 634, y: 614, ic: "rec", label: "Delete" },
  { kind: "tile", x: 570, y: 637, ic: "dbQuery", label: "Database Query" },
  { kind: "tile", x: 570, y: 659, ic: "rec", label: "Delete" },
];
const branches: [number, number][] = [
  [259, 381],
  [451, 494],
  [515, 538],
];

const RibbonCmd: React.FC<{ ic: string; off?: boolean; hot?: boolean; h?: number; g?: number; children: React.ReactNode }> = ({
  ic,
  off,
  hot,
  h = 18,
  g = 2,
  children,
}) => (
  <Cmd $off={off} $hot={hot} $h={h} $g={g}>
    <Icon n={ic} s={12} />
    {children}
  </Cmd>
);

const TreeGuides: React.FC = () => {
  const rh = 13.48;
  const y0 = 1;
  const rows = tree.map((n, i) => ({ ...n, y: y0 + i * rh + rh / 2 }));
  const lines: React.ReactNode[] = [];
  rows.forEach((r, i) => {
    const gx = 7.5 + r.lv * 13.5;
    lines.push(<line key={"h" + i} x1={gx} x2={gx + 10} y1={r.y} y2={r.y} stroke="#a0a0a0" />);
  });
  const last = (p: (n: TN) => boolean) => rows.reduce((m, n, i) => (p(n) ? i : m), 0);
  const v = (x: number, a: number, b: number, k: string) => (
    <line key={k} x1={x} x2={x} y1={rows[a].y} y2={rows[b].y} stroke="#a0a0a0" />
  );
  lines.push(v(7.5, 0, last((n) => n.lv === 0), "v0"));
  lines.push(v(21, 0, last((n) => n.lv === 1), "v1"));
  lines.push(v(34.5, 7, 10, "v2"));
  return (
    <Guides width="146" height="360">
      {lines}
    </Guides>
  );
};

export default function App() {
  const rowNums: React.ReactNode[] = [];
  for (let i = 0; i < 16; i++) rowNums.push(<RowNum key={i}>{39 + i}</RowNum>);
  return (
    <Stage>
      <Global />
      <Win>
        <Orb>W</Orb>
        <TitleBar>
          <Quick>
            <Icon n="newdoc" s={13} />
            <Icon n="open" s={13} />
            <Icon n="save" s={13} />
            <Icon n="deploy" s={13} />
            <Icon n="undo" s={13} />
            <Icon n="redo" s={13} />
          </Quick>
          <QuickDrop />
          <WinBtns>
            <Min />
            <Restore />
            <CloseMark>✕</CloseMark>
          </WinBtns>
        </TitleBar>
        <Tabs>
          <Tab $w={41} $on>Home</Tab>
          <Tab $w={43}>View</Tab>
          <Tab $w={43}>Debug</Tab>
          <Tab $w={44}>Tools</Tab>
          <Tab $w={36}>Help</Tab>
        </Tabs>
        <Ribbon>
          <Group $w={129}>
            <GroupBody>
              <Col $w={45} $pl={5}>
                <RibbonCmd ic="cutRings">{u("C", "u", "t")}</RibbonCmd>
                <RibbonCmd ic="copy">{u("", "C", "opy")}</RibbonCmd>
                <RibbonCmd ic="paste" off>{u("", "P", "aste")}</RibbonCmd>
              </Col>
              <Col>
                <RibbonCmd ic="paste" off>{u("Paste ", "P", "roperties")}</RibbonCmd>
                <RibbonCmd ic="pasteErr" off>{u("Paste On ", "E", "rror")}</RibbonCmd>
                <RibbonCmd ic="del" off>{u("", "D", "elete")}</RibbonCmd>
              </Col>
            </GroupBody>
            <GroupName>Clipboard</GroupName>
          </Group>
          <Group $w={284}>
            <GroupBody>
              <Col $w={82} $pl={4}>
                <RibbonCmd ic="process">{u("", "P", "rocess")}</RibbonCmd>
                <RibbonCmd ic="startup">Startup process</RibbonCmd>
                <RibbonCmd ic="subprocess">Subprocess</RibbonCmd>
              </Col>
              <Col $w={82} $pl={1}>
                <RibbonCmd ic="active" hot g={3}>Active</RibbonCmd>
                <RibbonCmd ic="startupOff" off g={3}>Startup</RibbonCmd>
                <RibbonCmd ic="selfrep" hot g={3}>Self Replicating</RibbonCmd>
              </Col>
              <Sep />
              <Col>
                <RibbonCmd ic="convert" off>Convert to Sub Process</RibbonCmd>
                <RibbonCmd ic="branch">Branch From Here...</RibbonCmd>
                <RibbonCmd ic="switchOff" off>Switch</RibbonCmd>
              </Col>
            </GroupBody>
            <GroupName>Processes</GroupName>
          </Group>
          <Group $w={82}>
            <GroupBody>
              <Col $pl={3} $wide>
                <RibbonCmd ic="localVar" h={24}>Local Variable</RibbonCmd>
                <RibbonCmd ic="globalVar" h={24}>Global Variable</RibbonCmd>
              </Col>
            </GroupBody>
            <GroupName>Variables</GroupName>
          </Group>
          <Group $w={305}>
            <GroupBody>
              <Col $w={144} $pl={3} $wide>
                <RibbonCmd ic="printer" h={24}>{u("Resident ", "D", "ocument")}</RibbonCmd>
                <RibbonCmd ic="editDoc" off h={24}>Edit Print Shop Mail Document</RibbonCmd>
              </Col>
              <Sep />
              <Col $w={90}>
                <RibbonCmd ic="update" off>Update</RibbonCmd>
                <RibbonCmd ic="updateInst" off>Update Instances</RibbonCmd>
                <RibbonCmd ic="delInst" off>Delete Instances</RibbonCmd>
              </Col>
              <Big $w={52}>
                <Icon n="refreshDoc" s={24} />
                <BigLabel>
                  Refresh
                  <br />
                  Documents<Caret>▾</Caret>
                </BigLabel>
              </Big>
            </GroupBody>
            <GroupName>Documents</GroupName>
          </Group>
          <Group $w={119}>
            <GroupBody>
              <Big $w={45}>
                <Icon n="printerAdd" s={25} />
                <BigLabel>
                  Printer
                  <br />
                  Queue<Caret>▾</Caret>
                </BigLabel>
              </Big>
              <Big $w={72} $off>
                <Icon n="printerOff" s={25} />
                <BigLabel>
                  Replace Printer
                  <br />
                  Queue<Caret>▾</Caret>
                </BigLabel>
              </Big>
            </GroupBody>
            <GroupName>Printer Queues</GroupName>
          </Group>
        </Ribbon>
        <Main>
          <LeftPane>
            <PaneHead>
              <span>Configuration Components</span>
              <X>×</X>
            </PaneHead>
            <TreeBox>
              <TreeGuides />
              {tree.map((n) => (
                <Row $lv={n.lv} key={n.t}>
                  <ExpSlot>{n.exp && <Exp $open={n.exp === "-"} />}</ExpSlot>
                  <Icon n={n.ic} s={n.lv === 0 ? 13 : 12} />
                  <NodeText $kind={n.kind} $sel={n.sel}>{n.t}</NodeText>
                </Row>
              ))}
              <HScroll>
                <HThumb />
                <Icon n="chevLeft" s={7} />
                <Icon n="chevRight" s={7} />
              </HScroll>
            </TreeBox>
          </LeftPane>
          <CenterPane>
            <PaneHead $blue>
              <span>Process - Broker</span>
            </PaneHead>
            <CanvasBox>
              <CanvasMain>
                <Ruler>
                  <RulerCorner />
                  {[1, 2, 3, 4, 5, 6, 7, 8].map((i) => (
                    <RulerCell key={i}>{i}</RulerCell>
                  ))}
                </Ruler>
                <CanvasBody>
                  <RowHeader>{rowNums}</RowHeader>
                  <Sheet>
                    <Selection />
                    <Wires width="770" height="362">
                      {wireSegs.map(([a, b, c, d], i) => (
                        <line key={"o" + i} x1={a - ox} y1={b - oy} x2={c - ox} y2={d - oy} stroke="#7496ca" strokeWidth="3.500" />
                      ))}
                      {wireSegs.map(([a, b, c, d], i) => (
                        <line key={"i" + i} x1={a - ox} y1={b - oy} x2={c - ox} y2={d - oy} stroke="#e8eef8" strokeWidth="1.200" />
                      ))}
                    </Wires>
                    {nodes.map((n, i) => (
                      <React.Fragment key={i}>
                        {n.kind === "tile" ? (
                          <NodeTile $x={n.x - ox - 7} $y={n.y - oy - 7}>
                            <Icon n={n.ic as string} s={12} />
                          </NodeTile>
                        ) : (
                          <Diamond $x={n.x - ox - 7} $y={n.y - oy - 7}>
                            <DiamondA>A</DiamondA>
                          </Diamond>
                        )}
                        <NodeLabel $x={n.x - ox + 8} $y={n.y - oy - 10}>{n.label}</NodeLabel>
                      </React.Fragment>
                    ))}
                    {branches.map(([x, y]) => (
                      <NodeLabel key={x} $x={x - ox} $y={y - oy}>Branch</NodeLabel>
                    ))}
                  </Sheet>
                </CanvasBody>
              </CanvasMain>
              <VScroll>
                <VThumb />
                <Icon n="chevUp" s={9} />
                <Icon n="chevDown" s={9} />
              </VScroll>
            </CanvasBox>
            <MsgGap />
            <MsgHead>
              <span>Messages</span>
              <X>×</X>
            </MsgHead>
            <MsgBody />
          </CenterPane>
          <RightPane>
            <PaneHead>
              <span>Plug-in Bar</span>
              <X>×</X>
            </PaneHead>
            <InputsHead>Inputs</InputsHead>
            <PluginGrid>
              {plugins.map(([ic, label]) => (
                <Plugin key={label}>
                  <Icon n={ic} s={21} />
                  <PluginLabel>
                    {label.split("\n").map((l) => (
                      <div key={l}>{l}</div>
                    ))}
                  </PluginLabel>
                </Plugin>
              ))}
            </PluginGrid>
            <Grip>••••••••••</Grip>
            <ToolStrip>
              <ToolBtn $w={12} $mr={8}>«</ToolBtn>
              {["tbOrange", "tbSheet", "tbBlue", "tbPlug", "tbDiamond", "tbPanel", "process"].map((n) => (
                <ToolBtn key={n}>
                  <Icon n={n} s={13} />
                </ToolBtn>
              ))}
              <ToolBtn $on>
                <Icon n="tbInput" s={13} />
              </ToolBtn>
              <ToolBtn $dim>»</ToolBtn>
              <ToolBtn $w={12}>
                <Icon n="tbMore" s={10} />
              </ToolBtn>
            </ToolStrip>
            <DockTabs>
              <DockTab $w={74}>Debug Information</DockTab>
              <DockTab $w={64}>Object Inspector</DockTab>
              <DockTab $w={28} $on>Plug-in</DockTab>
              <DockArrows>
                <Icon n="triLeft" s={8} />
                <Icon n="triRight" s={8} />
              </DockArrows>
            </DockTabs>
          </RightPane>
        </Main>
        <Status>
          <Version>2020.2.1.9</Version>
          <Stopped>Stopped</Stopped>
        </Status>
      </Win>
    </Stage>
  );
}
